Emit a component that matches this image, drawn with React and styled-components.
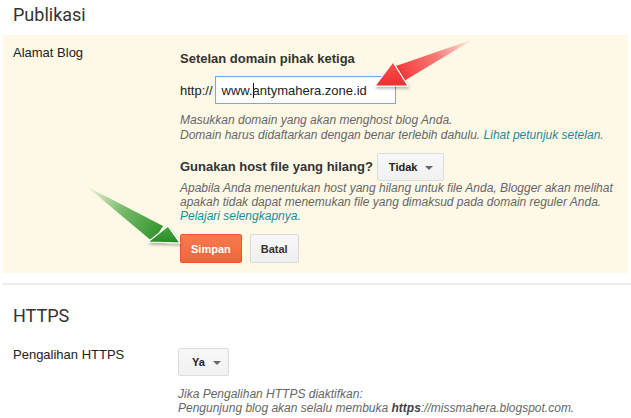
import React from 'react';
import styled, { createGlobalStyle } from 'styled-components';

const Global = createGlobalStyle`
	body {
		margin: 0;
		background: #fff;
		font-family: "Liberation Sans", Arial, sans-serif;
		color: #222;
	}
`;

const Page = styled.div`
	position: relative;
	width: 631px;
	height: 418px;
	overflow: hidden;
`;

const SectionTitle = styled.div`
	font-family: Roboto, "Liberation Sans", sans-serif;
	font-size: 18px;
	line-height: 21px;
	color: #333;
	padding: ${p => p.$top || 4}px 0 0 13px;
	height: ${p => p.$height || 35}px;
	box-sizing: border-box;
`;

const Panel = styled.div`
	margin: 0 3px;
	background: #fef9e7;
	padding: 10px 0 10px 10px;
`;

const Row = styled.div`
	display: grid;
	grid-template-columns: ${p => p.$label}px 1fr;
	padding-left: ${p => p.$indent || 0}px;
`;

const Label = styled.div`
	font-size: 13px;
	line-height: 16px;
	color: #222;
	padding-top: ${p => p.$top || 0}px;
`;

const Content = styled.div`
	display: flex;
	flex-direction: column;
	align-items: flex-start;
	padding-top: ${p => p.$top || 0}px;
`;

const Heading = styled.div`
	font-weight: bold;
	font-size: 13px;
	line-height: 16px;
	color: #333;
`;

const InputRow = styled.div`
	display: flex;
	align-items: center;
	gap: 2px;
	margin-top: 9px;
	font-size: 13px;
	color: #222;
`;

const TextBox = styled.div`
	width: 181px;
	height: 28px;
	box-sizing: border-box;
	border: 1px solid #7ea6ec;
	box-shadow: inset 0 1px 2px rgba(0,0,0,0.08);
	background: #fff;
	padding-left: 6px;
	display: flex;
	align-items: center;
	font-size: 13px;
	color: #222;
`;

const Caret = styled.span`
	display: inline-block;
	width: 1px;
	height: 15px;
	background: #111;
	margin-right: -1px;
`;

const Hint = styled.div`
	margin-top: ${p => p.$top || 0}px;
	font-style: italic;
	font-size: 12px;
	line-height: ${p => p.$lh || 14}px;
	color: #666;
	white-space: nowrap;
	b { font-weight: bold; color: #444; }
`;

const Link = styled.a`
	color: #1b8a9a;
	text-decoration: none;
`;

const QuestionRow = styled.div`
	display: flex;
	align-items: center;
	gap: 4px;
	margin-top: ${p => p.$top || 0}px;
`;

const Select = styled.div`
	height: 28px;
	width: ${p => p.$w}px;
	margin-top: ${p => p.$top || 0}px;
	box-sizing: border-box;
	border: 1px solid #dcdcdc;
	border-radius: 2px;
	background: linear-gradient(#f8f8f8, #f1f1f1);
	display: flex;
	align-items: center;
	padding-left: ${p => p.$pad || 11}px;
	gap: 8px;
	font-weight: bold;
	font-size: 11px;
	color: #222;
`;

const Caret4 = styled.span`
	width: 0;
	height: 0;
	border-left: 4px solid transparent;
	border-right: 4px solid transparent;
	border-top: 4px solid #666;
	margin-top: 1px;
`;

const Buttons = styled.div`
	display: flex;
	gap: 8px;
	margin-top: 11px;
`;

const Button = styled.div`
	height: 29px;
	box-sizing: border-box;
	padding: 0 10px;
	border-radius: 2px;
	display: flex;
	align-items: center;
	font-weight: bold;
	font-size: 11px;
	border: 1px solid ${p => p.$primary ? '#e4582a' : '#d9d9d9'};
	background: ${p => p.$primary ? 'linear-gradient(#f77b4f, #f0653b)' : 'linear-gradient(#f7f7f7, #f0f0f0)'};
	color: ${p => p.$primary ? '#fff' : '#333'};
`;

const Divider = styled.div`
	margin: 10px 0 0 3px;
	height: 2px;
	background: #ebebeb;
`;

const Overlay = styled.svg`
	position: absolute;
	left: 0;
	top: 0;
	pointer-events: none;
`;

const Arrows = () => (
	<Overlay width="631" height="418" viewBox="0 0 631 418">
		<defs>
			<linearGradient id="redTail" x1="400" y1="74" x2="474" y2="39" gradientUnits="userSpaceOnUse">
				<stop offset="0" stopColor="#f23a3a" />
				<stop offset="0.5" stopColor="#f45050" stopOpacity="0.75" />
				<stop offset="1" stopColor="#f45050" stopOpacity="0" />
			</linearGradient>
			<linearGradient id="redHead" x1="0" y1="0" x2="0" y2="1">
				<stop offset="0" stopColor="#ff5050" />
				<stop offset="1" stopColor="#ec2e2e" />
			</linearGradient>
			<linearGradient id="greenTail" x1="158" y1="234" x2="86" y2="186" gradientUnits="userSpaceOnUse">
				<stop offset="0" stopColor="#35962f" />
				<stop offset="0.5" stopColor="#4aa640" stopOpacity="0.75" />
				<stop offset="1" stopColor="#4aa640" stopOpacity="0" />
			</linearGradient>
			<linearGradient id="greenHead" x1="0" y1="0" x2="0" y2="1">
				<stop offset="0" stopColor="#45a83a" />
				<stop offset="1" stopColor="#2a8a2a" />
			</linearGradient>
			<filter id="shade" x="-30%" y="-30%" width="160%" height="160%">
				<feDropShadow dx="1" dy="2" stdDeviation="1.5" floodColor="#000" floodOpacity="0.3" />
			</filter>
		</defs>
		<polygon points="396,66 404,81 474,39" fill="url(#redTail)" />
		<polygon points="375,86 393,62 408,86" fill="url(#redHead)" stroke="#fff" strokeWidth="1.2" strokeLinejoin="round" filter="url(#shade)" />
		<polygon points="86,186 153,242 163,226" fill="url(#greenTail)" />
		<polygon points="180,243 168,226 148,242" fill="url(#greenHead)" stroke="#fff" strokeWidth="1.2" strokeLinejoin="round" filter="url(#shade)" />
	</Overlay>
);

export default function App() {
	return (
		<>
			<Global />
			<Page>
				<SectionTitle>Publikasi</SectionTitle>
				<Panel>
					<Row $label={167}>
						<Label>Alamat Blog</Label>
						<Content $top={6}>
							<Heading>Setelan domain pihak ketiga</Heading>
							<InputRow>
								<span>http://</span>
								<TextBox>www.<Caret />antymahera.zone.id</TextBox>
							</InputRow>
							<Hint $top={9} $lh={15}>
								Masukkan domain yang akan menghost blog Anda.<br />
								Domain harus didaftarkan dengan benar terlebih dahulu. <Link>Lihat petunjuk setelan.</Link>
							</Hint>
							<QuestionRow $top={10}>
								<Heading>Gunakan host file yang hilang?</Heading>
								<Select $w={67}>Tidak <Caret4 /></Select>
							</QuestionRow>
							<Hint>
								Apabila Anda menentukan host yang hilang untuk file Anda, Blogger akan melihat<br />
								apakah tidak dapat menemukan file yang dimaksud pada domain reguler Anda.<br />
								<Link>Pelajari selengkapnya.</Link>
							</Hint>
							<Buttons>
								<Button $primary>Simpan</Button>
								<Button>Batal</Button>
							</Buttons>
						</Content>
					</Row>
				</Panel>
				<Divider />
				<SectionTitle $top={20} $height={62}>HTTPS</SectionTitle>
				<Row $label={165} $indent={13}>
					<Label>Pengalihan HTTPS</Label>
					<Content>
						<Select $w={51} $top={1} $pad={13}>Ya <Caret4 /></Select>
						<Hint $top={11}>
							Jika Pengalihan HTTPS diaktifkan:<br />
							Pengunjung blog akan selalu membuka <b>https</b>://missmahera.blogspot.com.
						</Hint>
					</Content>
				</Row>
				<Arrows />
			</Page>
		</>
	);
}
